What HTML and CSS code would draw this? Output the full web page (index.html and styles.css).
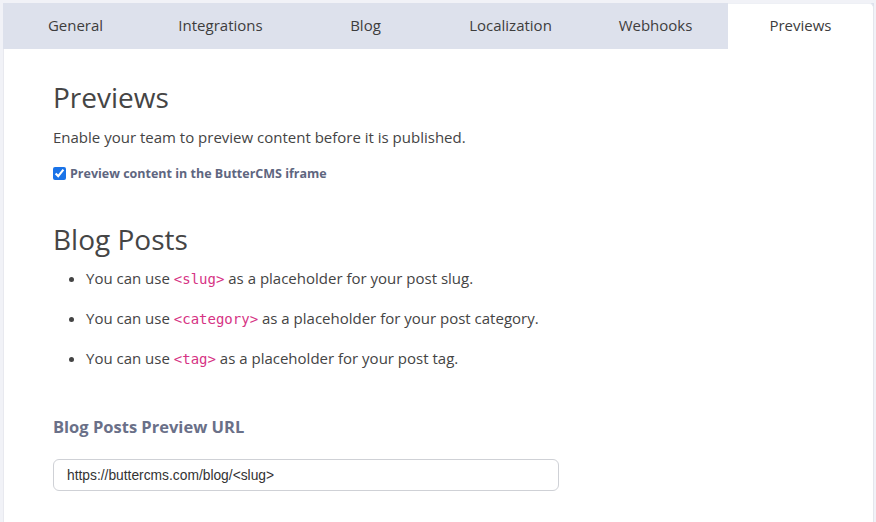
FILE: index.html
```html
<!DOCTYPE html>
<html lang="en">

<head>
  <meta charset="UTF-8">
  <meta name="viewport" content="width=device-width, initial-scale=1.0">
  <title>Settings - Previews</title>
  <link rel="stylesheet" href="styles.css">
</head>

<body>
  <div class="settings">
    <ul class="tabs">
      <li><a href="javascript:;">General</a></li>
      <li><a href="javascript:;">Integrations</a></li>
      <li><a href="javascript:;">Blog</a></li>
      <li><a href="javascript:;">Localization</a></li>
      <li><a href="javascript:;">Webhooks</a></li>
      <li class="active"><a href="javascript:;">Previews</a></li>
    </ul>

    <div class="panel">
      <h2>Previews</h2>
      <p class="lead">Enable your team to preview content before it is published.</p>
      <label class="check">
        <input type="checkbox" checked>
        <span>Preview content in the ButterCMS iframe</span>
      </label>

      <h2 class="section">Blog Posts</h2>
      <ul class="hints">
        <li>You can use <code>&lt;slug&gt;</code> as a placeholder for your post slug.</li>
        <li>You can use <code>&lt;category&gt;</code> as a placeholder for your post category.</li>
        <li>You can use <code>&lt;tag&gt;</code> as a placeholder for your post tag.</li>
      </ul>

      <h4 class="field-label">Blog Posts Preview URL</h4>
      <input class="field" type="text" value="https://buttercms.com/blog/<slug>">
    </div>
  </div>
</body>

</html>
```

FILE: styles.css
```css
* {
  padding: 0;
  margin: 0;
  box-sizing: border-box;
}

body {
  background-color: #f1f2f7;
  font-family: "Open Sans", "Liberation Sans", sans-serif;
  color: #444;
  padding: 3px 3px 0 3px;
}

.settings {
  width: 871px;
}

.tabs {
  list-style-type: none;
  display: flex;
  background-color: #dde1ec;
  height: 46px;
}

.tabs li {
  flex: 1;
  display: flex;
}

.tabs a {
  flex: 1;
  display: flex;
  justify-content: center;
  align-items: center;
  text-decoration: none;
  color: #3d3d3d;
  font-size: 15px;
  padding-bottom: 2px;
}

.tabs .active {
  background-color: #fff;
  border-top-right-radius: 5px;
  border-top: 1px solid #eef0f5;
  border-right: 1px solid #e4e5ec;
}

.tabs .active a {
  padding-bottom: 3px;
}

.panel {
  background-color: #fff;
  border-left: 1px solid #e8e9ef;
  border-right: 1px solid #e4e5ec;
  padding: 30px 49px 40px 49px;
  min-height: 480px;
}

h2 {
  font-weight: 400;
  font-size: 28px;
  line-height: 36px;
  color: #454545;
}

.lead {
  margin-top: 11px;
  font-size: 15px;
  line-height: 22px;
}

.check {
  display: flex;
  align-items: center;
  margin-top: 17px;
  font-size: 12.5px;
  font-weight: 700;
  color: #5e6680;
}

.check input {
  width: 13px;
  height: 13px;
  margin-right: 4px;
  accent-color: #1a73e8;
}

.section {
  margin-top: 39px;
}

.hints {
  margin-top: 10px;
  padding-left: 33px;
  font-size: 15px;
}

.hints li {
  line-height: 22px;
  margin-bottom: 17px;
}

code {
  font-family: "DejaVu Sans Mono", "Liberation Mono", monospace;
  font-size: 14px;
  color: #d63384;
}

.field-label {
  margin-top: 45px;
  font-size: 16.5px;
  font-weight: 700;
  color: #6a7088;
}

.field {
  display: block;
  margin-top: 21px;
  width: 506px;
  height: 32px;
  border: 1px solid #cfd1d6;
  border-radius: 6px;
  padding: 0 13px;
  font-family: "Liberation Sans", Arial, sans-serif;
  font-size: 13.8px;
  color: #333;
}
```
